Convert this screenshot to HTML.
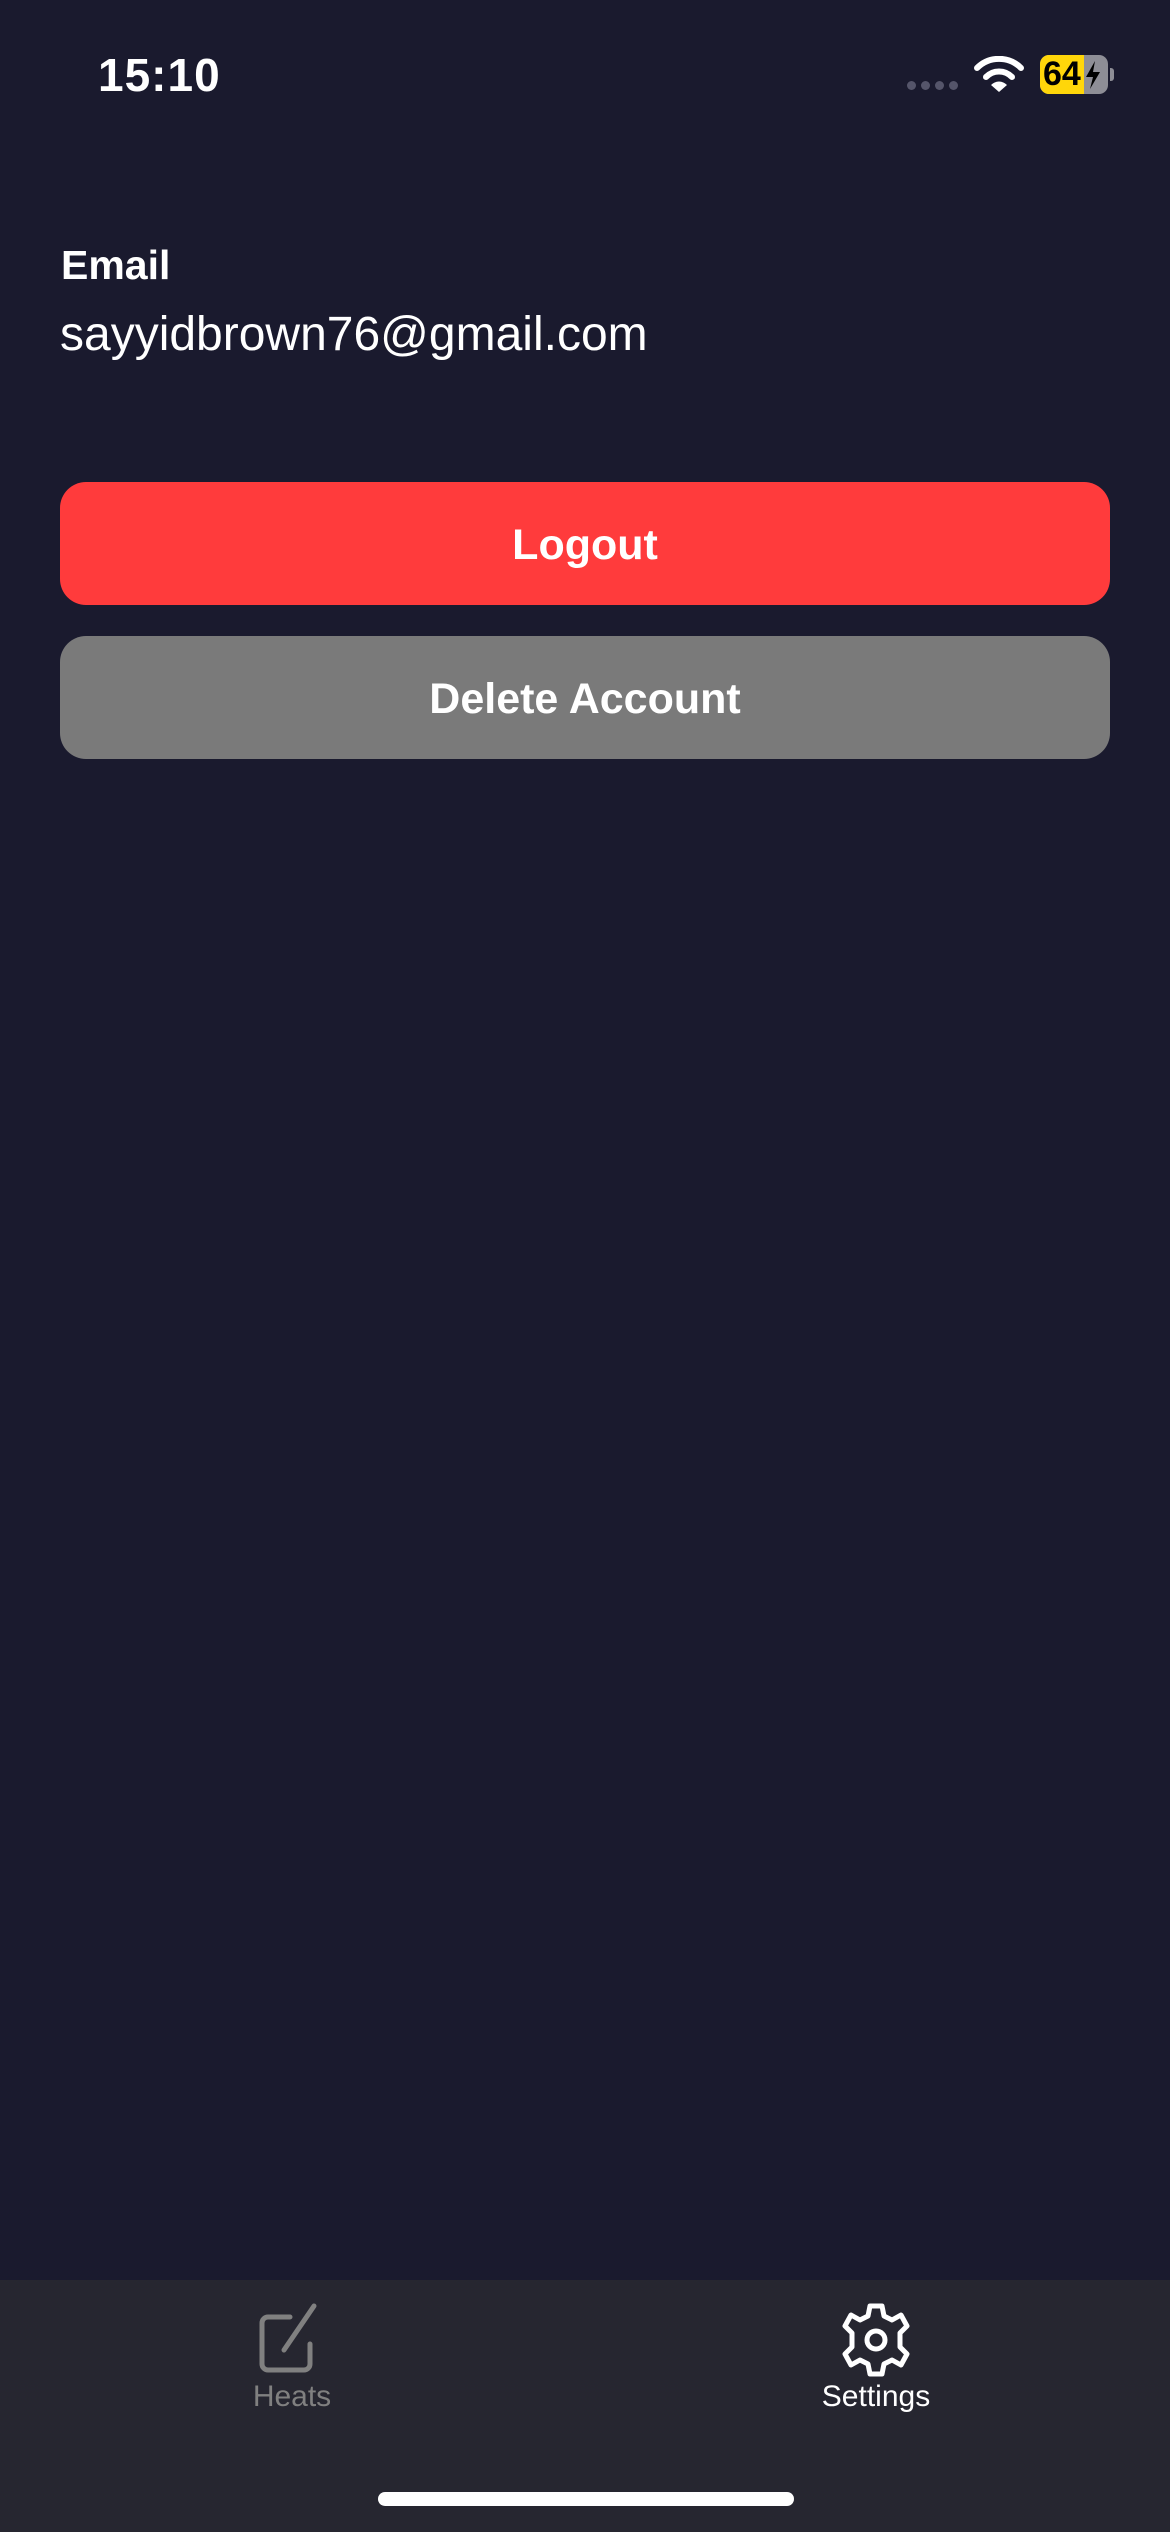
<!DOCTYPE html>
<html><head><meta charset="utf-8"><style>
*{margin:0;padding:0;box-sizing:border-box}
body{width:1170px;height:2532px;background:#1a1a2e;position:relative;overflow:hidden;font-family:"Liberation Sans",sans-serif;color:#fff}
.abs{position:absolute}
.btn{position:absolute;left:60px;width:1050px;height:123px;border-radius:26px;display:flex;align-items:center;justify-content:center;font-weight:bold;font-size:43px;color:#fff;padding-top:4px}
</style></head><body>
<div class="abs" style="left:98px;top:48px;font-size:46px;font-weight:bold;letter-spacing:1px">15:10</div>
<div class="abs" style="left:907px;top:81px;display:flex;gap:5px">
<div style="width:9px;height:9px;border-radius:50%;background:#55556a"></div><div style="width:9px;height:9px;border-radius:50%;background:#55556a"></div><div style="width:9px;height:9px;border-radius:50%;background:#55556a"></div><div style="width:9px;height:9px;border-radius:50%;background:#55556a"></div></div>
<svg class="abs" style="left:974px;top:56px" width="50" height="36" viewBox="0 0 50 36"><path d="M3 12 A31 31 0 0 1 47 12" stroke="#fff" stroke-width="6" fill="none" stroke-linecap="round"/><path d="M12 21 A18 18 0 0 1 38 21" stroke="#fff" stroke-width="6" fill="none" stroke-linecap="round"/><path d="M17 29 L25 36 L33 29 A11 11 0 0 0 17 29Z" fill="#fff"/></svg>
<div class="abs" style="left:1040px;top:55px;width:68px;height:39px;border-radius:9px;background:#8e8e96;overflow:hidden"><div style="width:44px;height:39px;background:#ffd60a"></div></div>
<div class="abs" style="left:1110px;top:68px;width:4px;height:13px;border-radius:0 3px 3px 0;background:#8e8e96"></div>
<div class="abs" style="left:1043px;top:55px;font-size:34px;font-weight:bold;color:#000;line-height:39px">64</div>
<svg class="abs" style="left:1084px;top:61px" width="18" height="28" viewBox="0 0 18 28"><path d="M11 0 L2 16 H9 L6 28 L16 11 H9Z" fill="#000"/></svg>
<div class="abs" style="left:61px;top:242px;font-size:41px;font-weight:bold">Email</div>
<div class="abs" style="left:60px;top:307px;font-size:48px">sayyidbrown76@gmail.com</div>
<div class="btn" style="top:482px;background:#ff3b3c">Logout</div>
<div class="btn" style="top:636px;background:#7a7a7a">Delete Account</div>
<div class="abs" style="left:0;top:2280px;width:1170px;height:252px;background:#262630"></div>
<svg class="abs" style="left:254px;top:2300px" width="76" height="76" viewBox="0 0 76 76"><path d="M36 17 H14 a6 6 0 0 0 -6 6 V64 a6 6 0 0 0 6 6 H50 a6 6 0 0 0 6 -6 V44" stroke="#808080" stroke-width="5" fill="none" stroke-linecap="round"/><path d="M30 50 L60 6" stroke="#808080" stroke-width="5" stroke-linecap="round"/></svg>
<div class="abs" style="left:200px;top:2380px;width:184px;text-align:center;font-size:30px;color:#808080">Heats</div>
<svg class="abs" style="left:838px;top:2302px" width="76" height="76" viewBox="0 0 76 76"><path d="M32 4 H44 L46 14 L54 18 L63 13 L69 24 L62 31 V45 L69 52 L63 63 L54 58 L46 62 L44 72 H32 L30 62 L22 58 L13 63 L7 52 L14 45 V31 L7 24 L13 13 L22 18 L30 14Z" stroke="#fff" stroke-width="5" fill="none" stroke-linejoin="round"/><circle cx="38" cy="38" r="9" stroke="#fff" stroke-width="5" fill="none"/></svg>
<div class="abs" style="left:776px;top:2380px;width:200px;text-align:center;font-size:30px;color:#fff">Settings</div>
<div class="abs" style="left:378px;top:2492px;width:416px;height:14px;border-radius:7px;background:#fff"></div>
</body></html>
